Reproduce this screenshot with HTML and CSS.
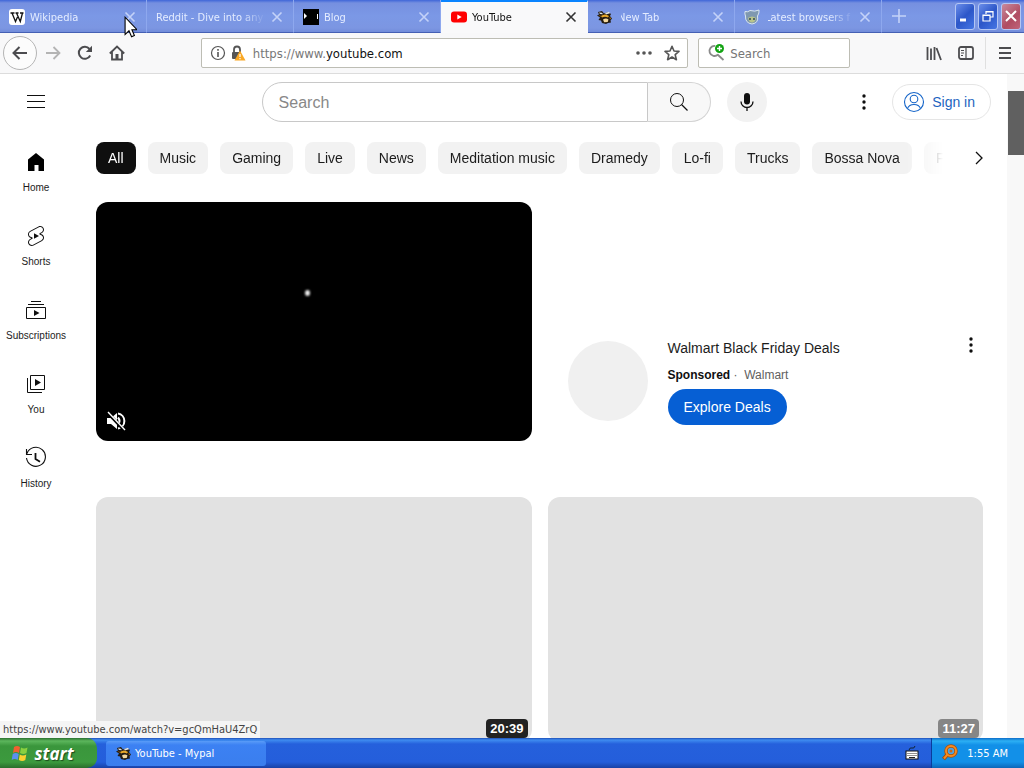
FILE: index.html
```html
<!DOCTYPE html>
<html lang="en">
<head>
<meta charset="utf-8">
<title>YouTube - Mypal</title>
<link rel="stylesheet" href="styles.css">
</head>
<body>
<svg class="defs" aria-hidden="true">
  <symbol id="x" viewBox="0 0 12 12"><path d="M1.5 1.5l9 9M10.5 1.5l-9 9" fill="none" stroke="currentColor" stroke-width="1.6"/></symbol>
  <symbol id="bee" viewBox="0 0 16 16">
    <path d="M1 3l4-1 2 2.500 4-1.500 3 2-1 2 2 2.500-1.500 2 .5 2-3 .5L9 15l-4-1-1-2.500L1.500 11 3 8.500 0 6.500l2-1z" fill="#241c12"/>
    <path d="M2 3.500l3 .2 1 1.600-3-.3zM8 4l4-1.200 1 1.500-4 1.200z" fill="#dfe4ea"/>
    <path d="M4 7q4-3 8 0l-1 1.500q-3-1.500-6 0z" fill="#e9a92a"/>
    <path d="M6 10.500q3-2 5.500 0l-.8 2.500-3.500.2z" fill="#f4d9a0"/>
    <path d="M12.500 8l1.500 1-1 1.500zM1.500 6.500l2 .3.500 1z" fill="#c98620"/>
  </symbol>
  <symbol id="dots" viewBox="0 0 24 24"><g fill="#0f0f0f"><circle cx="12" cy="6" r="1.7"/><circle cx="12" cy="12" r="1.7"/><circle cx="12" cy="18" r="1.7"/></g></symbol>
</svg>

<header class="tabstrip">
  <div class="tab">
    <svg class="favicon" viewBox="0 0 16 16"><rect width="16" height="16" rx="3" fill="#fff"/><path d="M1.5 4h4M6.500 4h3M11 4h3.500M3 4l3.500 8.500L8.500 8M7.500 4l3.800 8.500L13.500 4" fill="none" stroke="#111" stroke-width="1.3"/></svg>
    <span class="tab-title">Wikipedia</span>
    <button class="tab-close" aria-label="Close Wikipedia"><svg><use href="#x"/></svg></button>
  </div>
  <div class="tab">
    <span class="tab-title">Reddit - Dive into any</span>
    <button class="tab-close" aria-label="Close Reddit"><svg><use href="#x"/></svg></button>
  </div>
  <div class="tab">
    <svg class="favicon" viewBox="0 0 16 16"><rect width="16" height="16" fill="#000"/><path d="M1 4v6l3-3z" fill="#fff"/><path d="M14.500 5v5" stroke="#fff"/></svg>
    <span class="tab-title">Blog</span>
    <button class="tab-close" aria-label="Close Blog"><svg><use href="#x"/></svg></button>
  </div>
  <div class="tab active">
    <svg class="favicon" viewBox="0 0 16 16"><rect y="2.500" width="16" height="11" rx="3" fill="#f00"/><path d="M6.300 5.500v5l4.400-2.500z" fill="#fff"/></svg>
    <span class="tab-title">YouTube</span>
    <button class="tab-close" aria-label="Close YouTube"><svg><use href="#x"/></svg></button>
  </div>
  <div class="tab">
    <svg class="favicon"><use href="#bee"/></svg>
    <span class="tab-title clipped">New Tab</span>
    <button class="tab-close" aria-label="Close New Tab"><svg><use href="#x"/></svg></button>
  </div>
  <div class="tab">
    <svg class="favicon" viewBox="0 0 16 16"><path d="M1 2.500q3 1 5-1 5 1.500 9-.5.500 3-1.500 6 1.500 7-5.500 8-7-1-6.500-8Q.5 5 1 2.500z" fill="#7f98b0" stroke="#dbe7ee"/><path d="M4 9q4-3 8 0-1 4.500-4 4.500T4 9z" fill="#b9c58c"/><circle cx="6" cy="10" r="1" fill="#345"/><circle cx="10" cy="10" r="1" fill="#345"/></svg>
    <span class="tab-title clipped">Latest browsers f</span>
    <button class="tab-close" aria-label="Close Latest browsers"><svg><use href="#x"/></svg></button>
  </div>
  <button class="new-tab" aria-label="New tab"><svg viewBox="0 0 14 14"><path d="M7 0v14M0 7h14" stroke="currentColor" stroke-width="1.600"/></svg></button>
  <div class="window-buttons">
    <button aria-label="Minimize"><svg viewBox="0 0 12 12"><path d="M1 10h6" stroke="#fff" stroke-width="3"/></svg></button>
    <button aria-label="Restore"><svg viewBox="0 0 12 12"><path d="M4 4V1.500h7V7H8M1 5h7v6H1zM1 5.500h7M4 2h7" fill="none" stroke="#fff" stroke-width="1.200"/></svg></button>
    <button class="close" aria-label="Close"><svg viewBox="0 0 12 12"><path d="M1 1l10 10M11 1L1 11" stroke="#fff" stroke-width="2"/></svg></button>
  </div>
</header>

<nav class="navbar">
  <button class="back" aria-label="Back"><svg viewBox="0 0 16 16"><path d="M15 8H1.500M7.500 2L1.500 8l6 6" fill="none" stroke="#4c4c4f" stroke-width="2"/></svg></button>
  <button class="tool faded" aria-label="Forward"><svg viewBox="0 0 16 16"><path d="M1 8h13.500M8.500 2l6 6-6 6" fill="none" stroke="currentColor" stroke-width="1.800"/></svg></button>
  <button class="tool" aria-label="Reload"><svg viewBox="0 0 16 16"><path d="M13.200 10.500A6 6 0 1 1 12.500 4" fill="none" stroke="currentColor" stroke-width="2"/><path d="M15 .8V7H8.800z" fill="currentColor"/></svg></button>
  <button class="tool" aria-label="Home"><svg viewBox="0 0 16 16"><path d="M.8 8.500L8 1.500l7.200 7M3 7v7.500h10V7" fill="none" stroke="currentColor" stroke-width="1.800"/><path d="M6.500 14V9h3v5" fill="currentColor"/></svg></button>
  <span class="spacer"></span>
  <div class="urlbar">
    <svg class="i16" viewBox="0 0 16 16"><circle cx="8" cy="8" r="6.500" fill="none" stroke="#555" stroke-width="1.200"/><path d="M8 7v5M8 4v1.700" stroke="#555" stroke-width="1.600"/></svg>
    <svg class="i16" viewBox="0 0 16 16"><path d="M4 8V4.500a3 3 0 0 1 6 0V7" fill="none" stroke="#555" stroke-width="1.800"/><rect x="2" y="7" width="9" height="7" rx="1" fill="#555"/><path d="M10 5.500l5.500 10h-11z" fill="#f9a825"/><path d="M10 9v3M10 13v1.200" stroke="#fff" stroke-width="1.200"/></svg>
    <div class="url" role="textbox" aria-label="Address" contenteditable="true" spellcheck="false">https://www.<b>youtube.com</b></div>
    <button aria-label="Page actions"><svg viewBox="0 0 16 16"><g fill="#555"><circle cx="2" cy="8" r="1.800"/><circle cx="8" cy="8" r="1.800"/><circle cx="14" cy="8" r="1.800"/></g></svg></button>
    <button aria-label="Bookmark"><svg viewBox="0 0 16 16"><path d="M8 1.300l2 4.700 5 .4-3.800 3.300 1.200 5L8 12l-4.400 2.700 1.200-5L1 6.400 6 6z" fill="none" stroke="#555" stroke-width="1.600" stroke-linejoin="round"/></svg></button>
  </div>
  <div class="searchbar">
    <svg viewBox="0 0 18 18"><path d="M8 2a5 5 0 1 0 3 8.500M10.500 10.500l6 5.500" fill="none" stroke="#8a8a8a" stroke-width="1.800"/><circle cx="12.500" cy="4.500" r="4.500" fill="#12a312"/><path d="M12.500 2v5M10 4.500h5" stroke="#fff" stroke-width="1.400"/></svg>
    <input type="text" placeholder="Search" aria-label="Web search">
  </div>
  <span class="spacer"></span>
  <button class="tool" aria-label="Library"><svg viewBox="0 0 16 16"><path d="M1.500 2v13M5 3.500V15M8.500 2v13M10.500 3l4.500 12" fill="none" stroke="currentColor" stroke-width="1.800"/></svg></button>
  <button class="tool sidebars" aria-label="Sidebars"><svg viewBox="0 0 16 16"><rect x="1" y="2" width="14" height="12" rx="2" fill="none" stroke="currentColor" stroke-width="1.800"/><path d="M8 2v12M3 5.500h3M3 8h3M3 10.500h2" stroke="currentColor" stroke-width="1.200"/></svg></button>
  <button class="tool app-menu" aria-label="Open menu"><svg viewBox="0 0 16 16"><path d="M2 3h12M2 8h12M2 13h12" stroke="currentColor" stroke-width="1.800"/></svg></button>
</nav>

<div class="viewport">
  <div class="page">
    <header class="masthead">
      <div class="masthead-start">
        <button class="round" aria-label="Guide"><svg viewBox="0 0 24 24"><path d="M3 5.500h18M3 11.500h18M3 17.500h18" stroke="#0f0f0f"/></svg></button>
      </div>
      <div class="masthead-center">
        <form class="search">
          <input type="text" placeholder="Search" aria-label="Search">
          <button type="button" aria-label="Search"><svg viewBox="0 0 24 24"><circle cx="10" cy="10" r="6.500" fill="none" stroke="#0f0f0f"/><path d="M14.500 14.500l6 6" stroke="#0f0f0f" stroke-width="1.200"/></svg></button>
        </form>
        <button class="round mic" aria-label="Search with your voice"><svg viewBox="0 0 24 24"><rect x="9" y="3" width="6" height="11.500" rx="3" fill="#0f0f0f"/><path d="M6 11.500a6 6 0 0 0 12 0M12 17.500V21" fill="none" stroke="#0f0f0f" stroke-width="1.300"/></svg></button>
      </div>
      <div class="masthead-end">
        <button class="round" aria-label="Settings"><svg><use href="#dots"/></svg></button>
        <a class="sign-in" href="#"><svg viewBox="0 0 24 24"><g fill="none" stroke="#1464c8" stroke-width="1.100"><circle cx="12" cy="12" r="9.500"/><circle cx="12" cy="9" r="3.800"/><path d="M5.500 18.500q1.500-4 6.500-4t6.500 4"/></g></svg>Sign in</a>
      </div>
    </header>

    <div class="body">
      <nav class="guide">
        <a href="#"><svg viewBox="0 0 24 24"><path d="M4 9.500L12 3l8 6.500V21h-5.500v-6h-4v6H4z" fill="#000"/></svg>Home</a>
        <a href="#"><svg viewBox="0 0 24 24"><path fill="#0f0f0f" d="M10 14.650v-5.300L15 12l-5 2.650zm7.770-4.330c-.77-.32-1.200-.5-1.200-.5L18 9.060c1.840-.96 2.530-3.230 1.560-5.060s-3.240-2.530-5.070-1.560L6 6.940c-1.290.68-2.070 2.040-2 3.490.07 1.420.93 2.670 2.220 3.250.03.01 1.200.5 1.200.5L6 14.930c-1.830.97-2.530 3.240-1.560 5.070.97 1.830 3.240 2.530 5.070 1.560l8.500-4.500c1.290-.68 2.060-2.040 1.990-3.490-.07-1.420-.94-2.680-2.230-3.250zm-.23 5.860l-8.500 4.500c-1.340.71-3.010.2-3.720-1.140-.71-1.340-.2-3.010 1.140-3.720l2.040-1.080v-1.210l-.69-.28-1.110-.46c-.99-.41-1.650-1.350-1.700-2.410-.05-1.060.52-2.060 1.460-2.560l8.500-4.500c1.340-.71 3.010-.2 3.720 1.140.71 1.340.2 3.010-1.140 3.720L15.500 9.260v1.210l1.800.74c.99.41 1.650 1.350 1.700 2.410.05 1.060-.52 2.060-1.460 2.560z"/></svg>Shorts</a>
        <a href="#"><svg viewBox="0 0 24 24"><path d="M7 3.500h10M4 6.500h16M2.500 9.500h19v11h-19z" fill="none" stroke="#0f0f0f"/><path d="M10 12l5.500 3-5.500 3z" fill="#0f0f0f"/></svg>Subscriptions</a>
        <a href="#"><svg viewBox="0 0 24 24"><path d="M6.500 3.500h14v14h-14zM3.500 6v14.500H18" fill="none" stroke="#0f0f0f"/><path d="M11 7l6 3.500-6 3.500z" fill="#0f0f0f"/></svg>You</a>
        <a href="#"><svg viewBox="0 0 24 24"><path d="M3 7.500A9.500 9.500 0 1 1 2.500 12M2.500 3v5.500H8" fill="none" stroke="#0f0f0f" stroke-width="1.100"/><path d="M11.500 7v6l4.500 2.700" fill="none" stroke="#0f0f0f" stroke-width="1.800"/></svg>History</a>
      </nav>

      <main>
        <div class="chip-bar">
          <div class="chips">
            <button class="selected">All</button>
            <button>Music</button>
            <button>Gaming</button>
            <button>Live</button>
            <button>News</button>
            <button>Meditation music</button>
            <button>Dramedy</button>
            <button>Lo-fi</button>
            <button>Trucks</button>
            <button>Bossa Nova</button>
            <button>F</button>
          </div>
          <button class="next" aria-label="Next"><svg viewBox="0 0 24 24"><path d="M9 6l6 6-6 6" fill="none" stroke="#0f0f0f" stroke-width="1.300"/></svg></button>
        </div>

        <div class="videos">
          <div class="player">
            <span class="glint"></span>
            <button aria-label="Unmute"><svg viewBox="0 0 20 20"><path d="M1 7h4l6-5v16l-6-5H1z" fill="#fff"/><path d="M12 6.500q3 3.500 0 7M12 2.500a7.600 7.600 0 0 1 0 15" fill="none" stroke="#fff" stroke-width="2"/><path d="M1 1l17 18" stroke="#000" stroke-width="3"/><path d="M2 1l17 18" stroke="#fff" stroke-width="1.400"/></svg></button>
          </div>
          <section class="ad">
            <span class="avatar"></span>
            <div class="ad-text">
              <h3>Walmart Black Friday Deals</h3>
              <p><b>Sponsored</b> · &nbsp;Walmart</p>
              <button class="cta">Explore Deals</button>
            </div>
            <button class="more" aria-label="More actions"><svg><use href="#dots"/></svg></button>
          </section>
          <a class="thumb" href="#" aria-label="Video, 20 minutes"><span class="time dark">20:39</span></a>
          <a class="thumb" href="#" aria-label="Video, 11 minutes"><span class="time">11:27</span></a>
        </div>
      </main>
    </div>
  </div>
  <div class="scrollbar"><div class="scroll-thumb"></div></div>
  <div class="status">https://www.youtube.com/watch?v=gcQmHaU4ZrQ</div>
</div>

<footer class="taskbar">
  <button class="start"><svg viewBox="0 0 18 18"><path d="M3 3q3-2 6 0L8 9Q5 7 2 9z" fill="#f06030"/><path d="M10 3.500q3 2 6.500 0l-1 5.500q-3 2-6.500 0z" fill="#8ad040"/><path d="M1.700 10q3-2 6 0l-1 6q-3-2-6 0z" fill="#5a90f0"/><path d="M8.800 10.500q3 2 6.500 0l-1 5.500q-3 2-6.500 0z" fill="#fcd030"/></svg>start</button>
  <button class="task"><svg><use href="#bee"/></svg>YouTube - Mypal</button>
  <svg class="keyboard" viewBox="0 0 14 14"><path d="M4 4q1-3 3-2t3-2" fill="none" stroke="#123" stroke-width="1"/><rect x="1" y="5" width="12" height="8" fill="#fff" stroke="#111"/><path d="M2.500 7.500h9M2.500 9.500h9" stroke="#222" stroke-dasharray="1 1"/><path d="M4 11.500h6" stroke="#222"/></svg>
  <div class="tray">
    <svg viewBox="0 0 18 18"><path d="M6.500 10.500L2.500 15" stroke="#a04a08" stroke-width="4"/><circle cx="10" cy="7" r="5" fill="#4aa5e8" stroke="#a85008" stroke-width="3.500"/><path d="M6.500 10.500L3 14.500" stroke="#f58a20" stroke-width="2"/><circle cx="10" cy="7" r="5" fill="none" stroke="#f58a20" stroke-width="2"/><circle cx="10" cy="7" r="1.500" fill="#c86818"/></svg>
    <time>1:55 AM</time>
  </div>
</footer>

<svg class="pointer" viewBox="0 0 12 20"><path d="M1 1v16l3.600-3.500L7 19l2.600-1.100L7.300 12.500H12z" fill="#fff" stroke="#000"/></svg>
</body>
</html>
```

FILE: styles.css
```css
* { box-sizing: border-box; }

body {
  margin: 0;
  height: 100vh;
  display: flex;
  flex-direction: column;
  overflow: hidden;
  background: #fff;
  color: #1c1c1c;
  font-family: "Liberation Sans", Arial, sans-serif;
  font-size: 14px;
}

button, input { font: inherit; color: inherit; }
button { display: flex; align-items: center; justify-content: center; padding: 0; border: 0; background: none; }
input { min-width: 0; outline: 0; }
a { color: inherit; text-decoration: none; }
svg { display: block; flex: none; }
.defs { position: absolute; width: 0; height: 0; }

/* Tab strip */
.tabstrip {
  flex: none;
  display: flex;
  height: 33px;
  background: linear-gradient(#3f66d8, #7690e0 3px, #7b98e6 16px, #7c96e2 28px, #6f8ad8);
  color: #e4ecff;
  font: 11px "DejaVu Sans Condensed", Tahoma, sans-serif;
}
.tab {
  flex: 0 1 147px;
  min-width: 0;
  display: flex;
  align-items: center;
  gap: 5px;
  padding: 2px 10px 0 9px;
  border-right: 1px solid #8ea8ee;
  border-bottom: 1px solid #4560b4;
}
.tab.active {
  padding: 0 10px;
  background: #f9f9fa;
  color: #111;
  border-color: #f9f9fa;
  border-top: 2px solid #0a84ff;
}
.favicon { width: 16px; height: 16px; }
.tab-title {
  flex: 1;
  overflow: hidden;
  white-space: nowrap;
  mask-image: linear-gradient(90deg, #000 calc(100% - 26px), transparent);
}
.tab-title.clipped { mask-image: linear-gradient(90deg, transparent 3px, #000 3px, #000 calc(100% - 26px), transparent); }
.tab-close { width: 12px; height: 28px; color: #c4d2f8; }
.active .tab-close { color: #333; }
.tab-close svg { width: 12px; height: 12px; }
.new-tab { width: 34px; color: #c4d2f8; border-bottom: 1px solid #4560b4; }
.new-tab svg { width: 14px; height: 14px; }
.window-buttons {
  flex: 1;
  display: flex;
  justify-content: flex-end;
  align-items: center;
  gap: 3px;
  padding-right: 3px;
  border-bottom: 1px solid #4560b4;
}
.window-buttons button {
  width: 20px;
  height: 27px;
  border: 1px solid #b4c6f4;
  border-radius: 3px;
  background: linear-gradient(135deg, #6b8eea, #2c56c8 50%, #4676e4);
}
.window-buttons .close { background: linear-gradient(135deg, #c88a9c, #b04c62 60%, #c0647a); }
.window-buttons svg { width: 12px; height: 12px; }

/* Navigation toolbar */
.navbar {
  flex: none;
  display: flex;
  align-items: center;
  height: 41px;
  padding: 0 3px;
  background: #f8f8f9;
  border-bottom: 1px solid #dcdcdc;
  color: #4c4c4f;
  font: 13px "DejaVu Sans Condensed", Tahoma, sans-serif;
}
.back { width: 34px; height: 34px; border: 1px solid #b5b5b5; border-radius: 50%; background: #fcfcfc; }
.tool { width: 32px; height: 32px; }
.tool svg, .back svg { width: 16px; height: 16px; }
.faded { color: #b4b4b4; }
.spacer { flex: 1; }
.urlbar, .searchbar {
  display: flex;
  align-items: center;
  height: 30px;
  padding: 0 3px 0 8px;
  border: 1px solid #bdbdb4;
  border-radius: 2px;
  background: #fff;
}
.urlbar { flex: 7; gap: 4px; }
.url { flex: 1; margin-left: 3px; color: #777; outline: 0; white-space: nowrap; }
.url b { font-weight: normal; color: #111; }
.urlbar button { width: 24px; }
.urlbar svg { width: 16px; height: 16px; }
.searchbar { width: 152px; margin-left: 10px; gap: 5px; }
.searchbar svg { width: 18px; height: 18px; }
.searchbar input { flex: 1; border: 0; padding: 0; background: none; }
.searchbar input::placeholder { color: #757575; }
.sidebars { margin-right: 3px; }
.app-menu { width: 36px; padding-left: 2px; border-left: 1px solid #e0e0e0; }

/* Web page */
.viewport { flex: 1; min-height: 0; display: flex; position: relative; overflow: hidden; }
.page { flex: 1; min-width: 0; }
.masthead {
  display: flex;
  align-items: center;
  justify-content: space-between;
  height: 56px;
  padding: 0 16px;
}
.masthead-start { width: 168px; }
.masthead-center { display: flex; gap: 16px; }
.masthead-end { display: flex; align-items: center; gap: 8px; }
.round { width: 40px; height: 40px; border-radius: 50%; }
.round svg, .search svg, .sign-in svg, .next svg, .guide svg, .more svg { width: 24px; height: 24px; }
.mic { background: #f2f2f2; }
.search { display: flex; height: 40px; }
.search input {
  width: 386px;
  padding: 1px 16px 0;
  border: 1px solid #c8c8c8;
  border-radius: 20px 0 0 20px;
  font-size: 16px;
}
.search input::placeholder { color: #888; }
.search button { width: 63px; border: 1px solid #d3d3d3; border-left: 0; border-radius: 0 20px 20px 0; background: #f8f8f8; }
.sign-in {
  display: flex;
  align-items: center;
  gap: 6px;
  height: 36px;
  padding: 0 15px 0 9px;
  border: 1px solid #e5e5e5;
  border-radius: 18px;
  color: #1c64c0;
}
.body { display: flex; }
.guide { flex: none; width: 72px; padding-top: 4px; }
.guide a {
  display: flex;
  flex-direction: column;
  align-items: center;
  gap: 7px;
  height: 74px;
  padding-top: 16px;
  font-size: 10px;
  line-height: 14px;
}
main { flex: 1; min-width: 0; padding-top: 12px; }
.chip-bar { display: flex; align-items: center; padding: 0 16px 0 24px; }
.chips {
  flex: 1;
  min-width: 0;
  display: flex;
  gap: 12px;
  overflow: hidden;
  mask-image: linear-gradient(90deg, #000 calc(100% - 60px), transparent calc(100% - 24px));
}
.chips button { flex: none; height: 32px; padding: 0 12px; border-radius: 8px; background: #f2f2f2; }
.chips .selected { background: #0f0f0f; color: #fff; }
.videos {
  display: grid;
  grid-template-columns: 1fr 1fr;
  gap: 56px 16px;
  padding: 28px 24px 0;
}
.player { position: relative; height: 239px; border-radius: 12px; background: #000; }
.player button { position: absolute; left: 10px; bottom: 10px; }
.player button svg { width: 20px; height: 20px; }
.glint { position: absolute; left: 48%; top: 37%; width: 5px; height: 6px; border-radius: 50%; background: #eee; filter: blur(1px); }
.ad { display: flex; align-items: flex-end; padding: 0 0 16px 20px; }
.avatar { width: 80px; height: 80px; margin: 0 20px 4px 0; border-radius: 50%; background: #f0f0f0; }
.ad-text { flex: 1; }
.ad h3 { margin: 0 0 8px; font-size: 14px; font-weight: normal; line-height: 20px; }
.ad p { margin: 0 0 5px; font-size: 12px; line-height: 18px; color: #606060; }
.ad p b { color: #0f0f0f; }
.cta { height: 36px; padding: 0 16px; border-radius: 18px; background: #065fd4; color: #fff; }
.more { align-self: flex-end; margin-bottom: 68px; }
.thumb {
  display: flex;
  align-items: flex-end;
  justify-content: flex-end;
  aspect-ratio: 16 / 9;
  padding: 4px;
  border-radius: 12px;
  background: #e2e2e2;
}
.time { padding: 0 4px; border-radius: 4px; background: #868686; color: #fff; font-size: 13px; font-weight: bold; line-height: 19px; }
.time.dark { background: #222; }
.scrollbar { flex: none; width: 17px; padding-top: 17px; background: #f8f8f8; }
.scroll-thumb { height: 64px; margin-left: 1px; background: #606060; }
.status {
  position: absolute;
  left: 0;
  bottom: 0;
  padding: 0 3px;
  background: #f5f5f5;
  color: #444;
  font: 11px/17px "DejaVu Sans Condensed", Tahoma, sans-serif;
}

/* Taskbar */
.taskbar {
  flex: none;
  display: flex;
  align-items: center;
  height: 30px;
  background: linear-gradient(#1f50b8, #3f8cf0 2px, #2560dc 6px, #245edb 24px, #1941a5);
  color: #fff;
  font: 11px "DejaVu Sans Condensed", Tahoma, sans-serif;
}
.start {
  gap: 5px;
  width: 97px;
  height: 30px;
  padding-right: 12px;
  border-radius: 0 10px 10px 0;
  background: linear-gradient(#2c7030, #5cb65c 3px, #3a963c 8px, #3c9a3e 24px, #2a6e2c);
  font: italic bold 17px "Open Sans", sans-serif;
  text-shadow: 1px 1px 1px #1c4a1c;
}
.start svg { width: 18px; height: 18px; }
.task {
  justify-content: flex-start;
  gap: 3px;
  width: 160px;
  height: 25px;
  margin: 0 auto 0 9px;
  padding-left: 10px;
  border-radius: 3px;
  background: linear-gradient(#5a9cf8, #3c81f3 4px, #3a7eee);
}
.task svg { width: 16px; height: 16px; }
.keyboard { width: 14px; height: 14px; margin-right: 12px; }
.tray {
  display: flex;
  align-items: center;
  gap: 8px;
  align-self: stretch;
  padding: 0 16px 0 9px;
  border-left: 1px solid #0a3c9c;
  background: linear-gradient(#0e6cc8, #2cb0f4 3px, #1290e8 7px, #1290e8 24px, #0c66b8);
}
.tray svg { width: 18px; height: 18px; }

.pointer { position: absolute; left: 124px; top: 16px; width: 13px; height: 22px; }
```
